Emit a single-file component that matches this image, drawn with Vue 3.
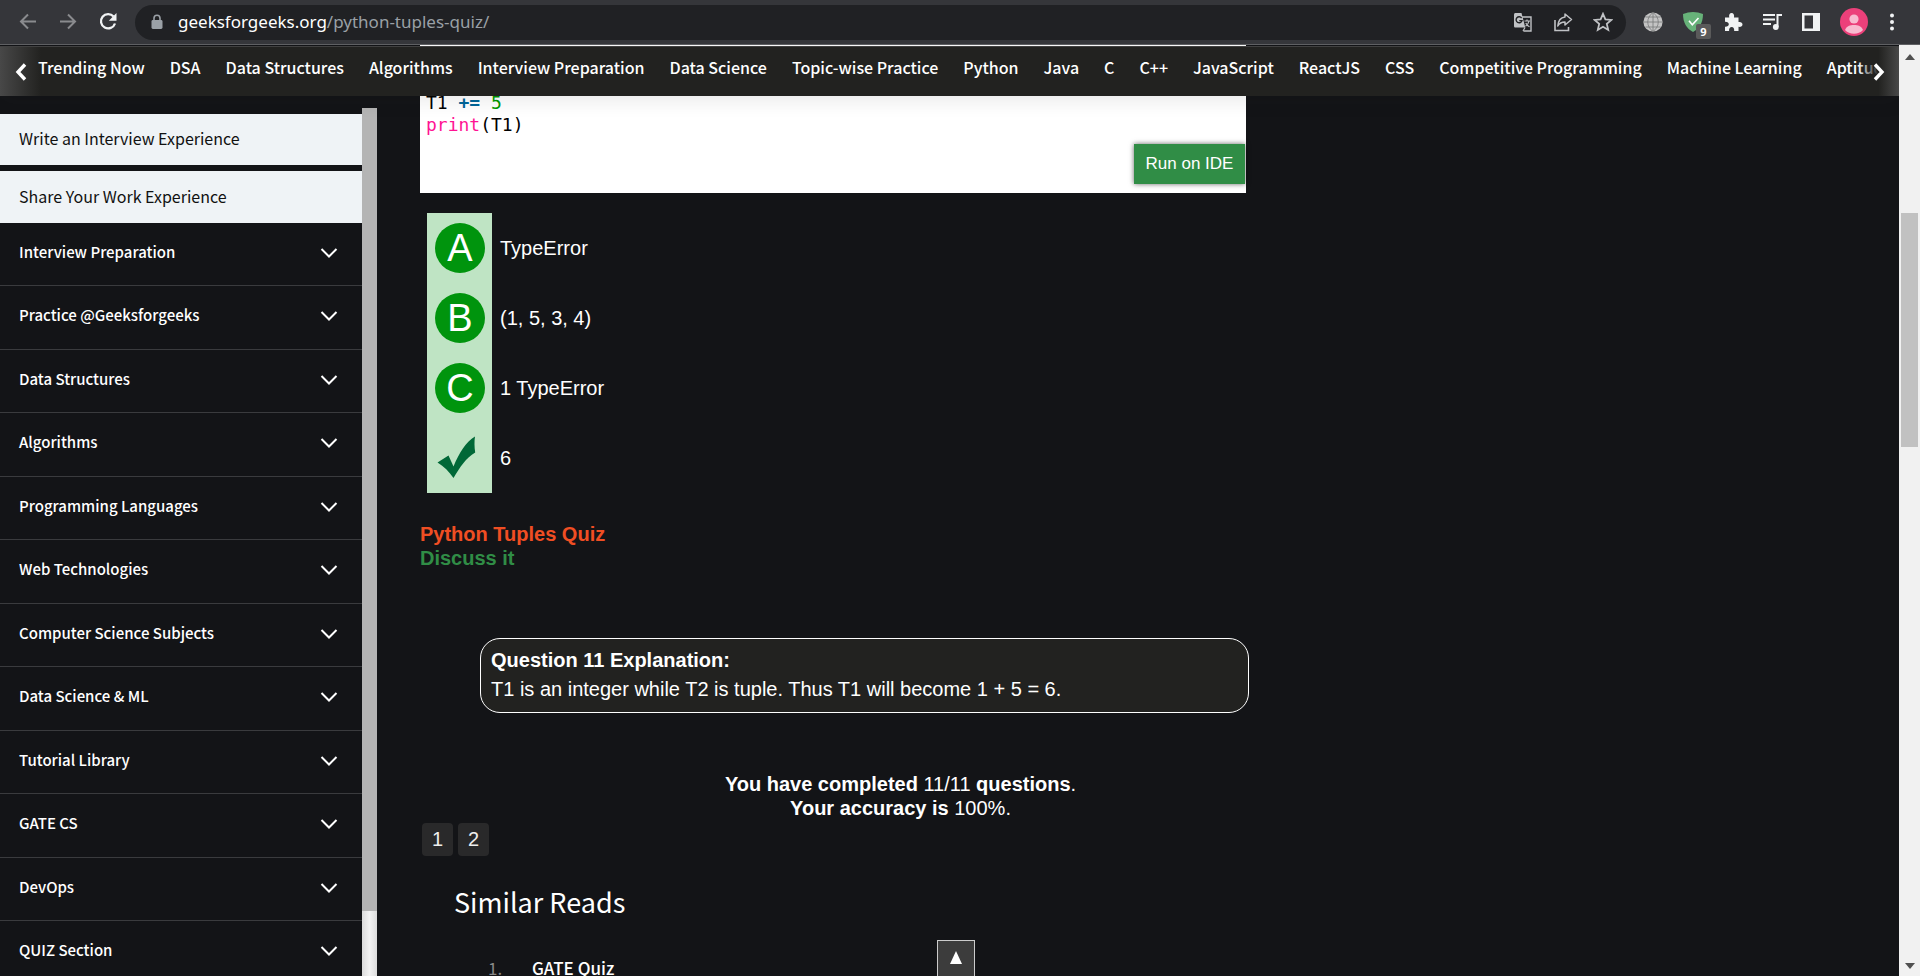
<script setup>
const topics = [
  'Trending Now', 'DSA', 'Data Structures', 'Algorithms', 'Interview Preparation', 'Data Science',
  'Topic-wise Practice', 'Python', 'Java', 'C', 'C++', 'JavaScript', 'ReactJS', 'CSS',
  'Competitive Programming', 'Machine Learning', 'Aptitude'
]
const sections = [
  'Interview Preparation', 'Practice @Geeksforgeeks', 'Data Structures', 'Algorithms',
  'Programming Languages', 'Web Technologies', 'Computer Science Subjects', 'Data Science & ML',
  'Tutorial Library', 'GATE CS', 'DevOps', 'QUIZ Section'
]
const options = [
  { letter: 'A', text: 'TypeError' },
  { letter: 'B', text: '(1, 5, 3, 4)' },
  { letter: 'C', text: '1 TypeError' },
  { letter: '', text: '6' }
]
</script>

<template>
  <div class="browser">
    <header class="toolbar">
      <div class="history">
        <button class="icon dim" aria-label="Back"><svg width="20" height="20" viewBox="0 0 20 20"><path d="M18 9.500H3M10 2.500L3 9.500l7 7" fill="none" stroke="currentColor" stroke-width="2" /></svg></button>
        <button class="icon dim" aria-label="Forward"><svg width="20" height="20" viewBox="0 0 20 20"><path d="M2 9.500h15M10 2.500l7 7-7 7" fill="none" stroke="currentColor" stroke-width="2" /></svg></button>
        <button class="icon bright" aria-label="Reload"><svg width="20" height="20" viewBox="0 0 20 20"><path d="M15.600 4.500A7.200 7.200 0 1 0 17 11.500" fill="none" stroke="currentColor" stroke-width="2.300" /><path d="M18.500 1v7.700h-7.700z" fill="currentColor" /></svg></button>
      </div>
      <div class="address">
        <svg class="lock" width="12" height="16" viewBox="0 0 12 16"><path d="M3 7V4.300a3 3 0 0 1 6 0V7" fill="none" stroke="#9aa0a6" stroke-width="1.600" /><rect x="0.500" y="6" width="11" height="9" rx="1.400" fill="#9aa0a6" /></svg>
        <span class="url"><b>geeksforgeeks.org</b>/python-tuples-quiz/</span>
        <button class="icon soft" aria-label="Translate"><svg width="20" height="20" viewBox="0 0 20 20"><path d="M9 5h9v14h-7.500" fill="none" stroke="currentColor" stroke-width="1.400" /><path d="M1 2.500C1 1.600 1.600 1 2.500 1H8.500l3.800 14.500H2.500C1.600 15.500 1 15 1 14z" fill="currentColor" /><path d="M8.600 6.100A3 3 0 1 0 9 8.600H6.300" fill="none" stroke="#202124" stroke-width="1.400" /><path d="M11.500 9h5.500M14 7.500V9M16 9c-.5 2.500-2 4.200-3.500 5.200M12.800 11c.8 1.700 2.200 3 3.700 3.800M10 19l2-3.500" fill="none" stroke="currentColor" stroke-width="1.200" /></svg></button>
        <button class="icon soft" aria-label="Share"><svg width="20" height="20" viewBox="0 0 20 20"><path d="M2 8v10.500h13.500V15" fill="none" stroke="currentColor" stroke-width="1.600" /><path d="M12 2l6.500 5.500L12 13V10C8.500 10 6.300 11.300 4.800 14 5.200 9 8 5.500 12 5z" fill="none" stroke="currentColor" stroke-width="1.500" stroke-linejoin="round" /></svg></button>
        <button class="icon soft" aria-label="Bookmark"><svg width="20" height="20" viewBox="0 0 20 20"><path d="M10 1.800l2.400 5.600 6 .5-4.600 4 1.400 6L10 14.700 4.800 17.900l1.400-6-4.600-4 6-.5z" fill="none" stroke="currentColor" stroke-width="1.800" /></svg></button>
      </div>
      <div class="extensions">
        <button class="icon" aria-label="Web"><svg width="20" height="20" viewBox="0 0 20 20"><circle cx="10" cy="10" r="9.600" fill="#c4c4c4" /><path d="M10 0v20M0.500 10h19M2.500 5h15M2.500 15h15M10 .5c-7 5-7 14 0 19M10 .5c7 5 7 14 0 19" fill="none" stroke="#77787a" stroke-width="0.800" /></svg></button>
        <button class="icon shield" aria-label="Ad blocker, 9 blocked"><svg width="22" height="22" viewBox="0 0 22 22"><path d="M11 1c3.300 0 6.800.7 10 2 0 8.500-3.500 14.500-10 18C4.500 17.500 1 11.500 1 3c3.200-1.300 6.700-2 10-2z" fill="#67b279" /><path d="M7 9.800l3.300 4L16.500 7" fill="none" stroke="#fff" stroke-width="1.600" /></svg><span class="badge">9</span></button>
        <button class="icon bright" aria-label="Extensions"><svg width="20" height="20" viewBox="0 0 20 20"><path d="M2 5.500h4.300C5.500 2.800 6.800 1 8.600 1s3 1.800 2.400 4.500h4.500v4.600c2.200-.5 4 .6 4 2.300s-1.800 2.900-4 2.400V19h-4.300c.2-2.700-.8-4-2.500-4s-2.800 1.300-2.600 4H2v-4.200c2.400.1 3.800-.8 3.800-2.500S4.400 9.700 2 9.800z" fill="currentColor" /></svg></button>
        <button class="icon bright" aria-label="Media"><svg width="20" height="20" viewBox="0 0 20 20"><path d="M1 3h12M1 7.500h12M1 12h8" stroke="currentColor" stroke-width="2" /><path d="M15.500 15V3h4.500" fill="none" stroke="currentColor" stroke-width="2" /><circle cx="13.800" cy="15" r="2.900" fill="currentColor" /></svg></button>
        <button class="icon bright" aria-label="Side panel"><svg width="20" height="20" viewBox="0 0 20 20"><path d="M1 1h18v18H1zM3.500 3.500v13H12v-13z" fill="currentColor" fill-rule="evenodd" /></svg></button>
        <button class="icon" aria-label="Profile"><svg width="28" height="28" viewBox="0 0 28 28"><circle cx="14" cy="14" r="14" fill="#ec407a" /><circle cx="14" cy="11" r="4.600" fill="#f8bbd0" /><path d="M5 22c1.500-4 5-5 9-5s7.500 1 9 5a12.500 12.500 0 0 1-18 0z" fill="#f8bbd0" /></svg></button>
        <button class="icon bright" aria-label="Menu"><svg width="10" height="20" viewBox="0 0 10 20"><circle cx="5" cy="3.500" r="2" fill="currentColor" /><circle cx="5" cy="10" r="2" fill="currentColor" /><circle cx="5" cy="16.500" r="2" fill="currentColor" /></svg></button>
      </div>
    </header>

    <div class="viewport">
      <div class="page">
        <nav class="topics">
          <a v-for="t in topics" :key="t" href="#">{{ t }}</a>
          <button class="scroll prev" aria-label="Previous topics"><svg width="12" height="18" viewBox="0 0 12 18"><path d="M10 1.500L3 9l7 7.500" fill="none" stroke="#fff" stroke-width="3.400" /></svg></button>
          <button class="scroll next" aria-label="Next topics"><svg width="12" height="18" viewBox="0 0 12 18"><path d="M2 1.500L9 9l-7 7.500" fill="none" stroke="#fff" stroke-width="3.400" /></svg></button>
        </nav>

        <aside class="sidebar">
          <div class="menu">
            <a class="promo" href="#">Write an Interview Experience</a>
            <a class="promo" href="#">Share Your Work Experience</a>
            <ul class="sections">
              <li v-for="s in sections" :key="s">
                <button class="section">{{ s }}<svg width="18" height="12" viewBox="0 0 18 12"><path d="M1.500 3L9 10.500 16.500 3" fill="none" stroke="#fff" stroke-width="2" /></svg></button>
              </li>
            </ul>
          </div>
          <div class="track"><div class="thumb"></div></div>
        </aside>

        <main class="quiz">
          <div class="code">
            <pre><code>T1 <b class="op">+=</b> <span class="num">5</span>
<span class="fn">print</span>(T1)</code></pre>
            <button class="run">Run on IDE</button>
          </div>

          <ul class="options">
            <li v-for="o in options" :key="o.text">
              <span class="mark">
                <span v-if="o.letter" class="letter">{{ o.letter }}</span>
                <svg v-else width="50" height="50" viewBox="0 -3 50 50"><path d="M2.500 26.500L13.500 19.500 18.500 30.500C24 17 31 6 40 0.500c-.8 5-.6 10.500.2 16C31 22 25 31 18.500 42 14 35.500 9 30.500 2.500 26.500z" fill="#006837" /></svg>
              </span>
              <span>{{ o.text }}</span>
            </li>
          </ul>

          <div class="links">
            <a class="quiz-link" href="#">Python Tuples Quiz</a>
            <a class="discuss" href="#">Discuss it</a>
          </div>

          <section class="explanation">
            <b>Question 11 Explanation:</b>
            <p>T1 is an integer while T2 is tuple. Thus T1 will become 1 + 5 = 6.</p>
          </section>

          <p class="result"><b>You have completed</b> 11/11 <b>questions</b>.<br><b>Your accuracy is</b> 100%.</p>

          <div class="pages"><a href="#">1</a><a href="#">2</a></div>

          <section class="similar">
            <h2>Similar Reads</h2>
            <ol><li><span class="index">1.</span><a href="#">GATE Quiz</a></li></ol>
          </section>
        </main>

        <button class="to-top" aria-label="Back to top"><svg width="14" height="14" viewBox="0 0 14 14"><path d="M7 0l6 13H1z" fill="#fff" /></svg></button>
      </div>

      <div class="scrollbar">
        <svg width="10" height="6" viewBox="0 0 10 6"><path d="M0 6l5-6 5 6z" fill="#505050" /></svg>
        <div class="grip"></div>
        <svg width="10" height="6" viewBox="0 0 10 6"><path d="M0 0l5 6 5-6z" fill="#505050" /></svg>
      </div>
    </div>
  </div>
</template>

<style>
body { margin: 0; background: #131417; }
</style>

<style scoped>
* { box-sizing: border-box; }
ul, ol, p, h2, pre { margin: 0; padding: 0; list-style: none; }
a { color: inherit; text-decoration: none; }
button { border: 0; padding: 0; background: none; color: inherit; font: inherit; }
svg { display: block; flex: none; }

.browser {
  display: flex;
  flex-direction: column;
  height: 100vh;
  overflow: hidden;
  background: #131417;
  color: #fff;
  font: 20px/24px "Liberation Sans", Arial, sans-serif;
}

.toolbar {
  display: flex;
  flex: none;
  align-items: center;
  height: 45px;
  padding: 0 23px 0 18px;
  background: #35363a;
  border-bottom: 1px solid #5f6063;
}
.history { display: flex; gap: 20px; width: 117px; }
.dim { color: #8a8b8e; }
.soft { color: #c0c2c5; }
.bright { color: #f1f3f4; }
.address {
  display: flex;
  flex: 1;
  align-items: center;
  gap: 20px;
  height: 35px;
  padding: 0 13px 0 16px;
  border-radius: 18px;
  background: #202124;
}
.url {
  flex: 1;
  margin-left: -5px;
  color: #9aa0a6;
  font: 17px/24px "Noto Sans", "Open Sans", sans-serif;
}
.url b { color: #fff; font-weight: 400; }
.extensions { display: flex; align-items: center; gap: 19px; padding-left: 17px; }
.shield { position: relative; }
.badge {
  position: absolute;
  left: 14px;
  top: 13px;
  width: 15px;
  height: 15px;
  border-radius: 2px;
  background: #5a5a5a;
  font: bold 11px/15px "Open Sans", sans-serif;
  text-align: center;
}

.viewport { display: flex; flex: 1; min-height: 0; }
.page {
  position: relative;
  display: flex;
  flex: 1;
  min-width: 0;
  overflow: hidden;
}

.topics {
  position: absolute;
  z-index: 2;
  top: 1px;
  left: 0;
  right: 0;
  display: flex;
  gap: 25px;
  height: 50px;
  padding: 8px 38px;
  overflow: hidden;
  border-top: 1px solid #414141;
  background: #222220;
  box-shadow: 0 4px 20px rgba(34, 34, 32, 0.1);
  font: 500 16px/24px "Noto Sans CJK SC", sans-serif;
  white-space: nowrap;
}
.scroll {
  position: absolute;
  top: 0;
  bottom: 0;
  display: flex;
  align-items: center;
  width: 41px;
  padding: 0 15px;
}
.scroll.prev { left: 0; background: linear-gradient(to right, #484848, rgba(34, 34, 32, 0)); }
.scroll.next { right: 0; background: linear-gradient(to right, rgba(34, 34, 32, 0), #222220 50%, #484848); }

.sidebar {
  display: flex;
  flex: none;
  width: 377px;
  padding-top: 63px;
  font: 16px/24px "Noto Sans CJK SC", sans-serif;
}
.menu { flex: 1; padding-top: 6px; }
.promo {
  display: block;
  margin-bottom: 6px;
  padding: 12px 19px 15px;
  background: #eff3f6;
  color: #111;
}
.promo + .promo { margin-bottom: 0; padding-top: 13px; }
.sections { font-size: 15px; font-weight: 500; }
.section {
  display: flex;
  align-items: center;
  justify-content: space-between;
  width: 100%;
  height: 63px;
  padding: 0 24px 5px 19px;
  border-bottom: 1px solid #3a3b3e;
}
li:nth-child(even) .section { height: 64px; }
.track { width: 15px; background: linear-gradient(to right, #dcdcdc, #f3f3f3 50%, #dcdcdc); }
.thumb { height: 92.5%; background: #b4b4b4; }

.quiz { width: 961px; margin-left: 43px; }
.code {
  position: relative;
  width: 86%;
  padding: 47px 6px 57px;
  background: #fff;
  color: #000;
}
.code pre, .code code { font: 18px/22px "DejaVu Sans Mono", monospace; }
.code .op { color: #006699; }
.num { color: #009900; }
.fn { color: #ff1493; }
.run {
  position: absolute;
  right: 1px;
  bottom: 9px;
  padding: 8px 12px;
  background: #308d46;
  box-shadow: 0 0 5px rgba(0, 0, 0, 0.6);
  color: #fff;
  font-size: 17px;
}

.options { margin: 20px 7px 29px; }
.options li { display: flex; align-items: center; gap: 8px; }
.mark { padding: 10px 7px 10px 8px; background: #bfe4c4; }
.letter {
  display: block;
  width: 50px;
  border-radius: 50%;
  background: #00940d;
  font-size: 38px;
  line-height: 50px;
  text-align: center;
}

.links { display: flex; flex-direction: column; align-items: flex-start; font-weight: 700; }
.quiz-link { color: #f04e23; }
.discuss { color: #308d46; }

.explanation {
  width: 80%;
  margin: 68px 0 59px 60px;
  padding: 7px 10px 8px;
  border: 1px solid #fff;
  border-radius: 20px;
  background: #222220;
  line-height: 29px;
}
.result { text-align: center; }

.pages { display: flex; gap: 5px; padding: 3px 2px; color: #eee; }
.pages a {
  width: 31px;
  border-radius: 4px;
  background: #29292a;
  line-height: 33px;
  text-align: center;
}
.similar { padding: 25px 34px; font-family: "Noto Sans CJK SC", sans-serif; }
.similar h2 { font-size: 27px; font-weight: 400; line-height: 36px; }
.similar ol { padding: 36px 34px; font-size: 17px; font-weight: 500; }
.similar li { display: flex; }
.index { width: 44px; color: #888; font-weight: 400; }

.to-top {
  position: absolute;
  bottom: 0;
  left: 937px;
  display: flex;
  justify-content: center;
  width: 38px;
  height: 36px;
  padding-top: 10px;
  border: 1px solid #ccc;
  border-bottom: 0;
  background: #3c3c3c;
}

.scrollbar {
  display: flex;
  flex: none;
  flex-direction: column;
  align-items: center;
  width: 21px;
  padding: 9px 0 7px;
  background: #f1f1f1;
}
.grip { flex: none; width: 17px; height: 234px; margin: 153px 0 auto; background: #c1c1c1; }
</style>
